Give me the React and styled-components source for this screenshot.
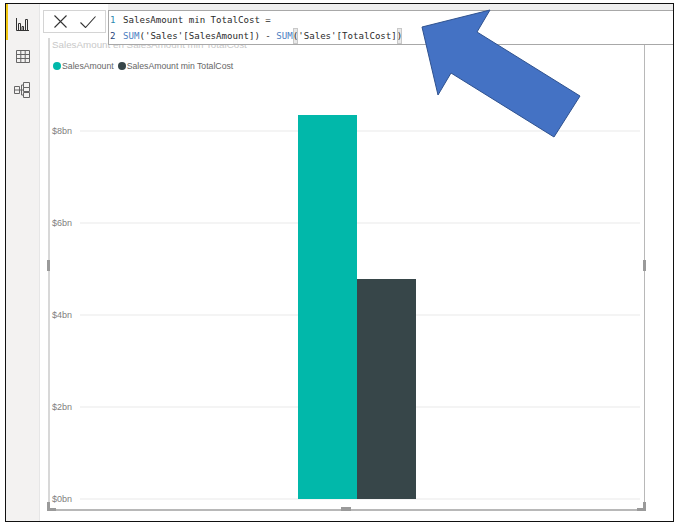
import React from 'react';
import styled, { createGlobalStyle } from 'styled-components';

const GlobalStyle = createGlobalStyle`
  html, body { margin: 0; padding: 0; background: #ffffff; }
  #root { width: 679px; height: 525px; }
`;

const Frame = styled.div`
  position: relative;
  width: 667px;
  height: 517px;
  margin: 3px 0 0 5px;
  border: 1px solid #111111;
  display: flex;
  overflow: hidden;
  background: #fff;
`;

const Rail = styled.nav`
  width: 33px;
  flex-shrink: 0;
  background: #f3f2f1;
  border-right: 1px solid #e6e6e6;
  display: flex;
  flex-direction: column;
`;

const RailItem = styled.div`
  height: ${p => (p.$active ? 32 : 33)}px;
  padding: ${p => (p.$active ? '4px' : '0')} 2px 0 0;
  display: flex;
  align-items: center;
  justify-content: center;
  border-left: 2px solid ${p => (p.$active ? '#f2c811' : 'transparent')};
`;

const Main = styled.main`
  flex: 1;
  min-width: 0;
  display: flex;
  padding: 34px 28px 10px 8px;
`;

const Visual = styled.section`
  position: relative;
  flex: 1;
  border: solid #b8b8b8;
  border-width: 0 1px 2px 2px;
  border-left-color: #d8d8d8;
  display: flex;
  flex-direction: column;
`;

const VisualTitle = styled.div`
  font: 9.8px/14px 'Liberation Sans', Arial, sans-serif;
  color: #c8c8c8;
  padding-left: 2px;
  height: 14px;
`;

const Legend = styled.div`
  display: flex;
  align-items: center;
  gap: 4px;
  height: 14px;
  margin-top: 7px;
  padding-left: 3px;
  font: 8.7px 'Liberation Sans', Arial, sans-serif;
  color: #666;
`;

const LegendEntry = styled.span`
  display: flex;
  align-items: center;
  gap: 1px;
`;

const Dot = styled.i`
  width: 8px;
  height: 8px;
  border-radius: 50%;
  background: ${p => p.$color};
`;

const Chart = styled.div`
  position: relative;
  flex: 1;
  display: flex;
  flex-direction: column;
  gap: 82px;
  padding: 53px 4px 0 2px;
`;

const GridRow = styled.div`
  display: flex;
  align-items: center;
  height: 10px;
  font: 9px 'Liberation Sans', Arial, sans-serif;
  color: #808080;
`;

const AxisLabel = styled.span`
  width: 28px;
`;

const GridLine = styled.div`
  flex: 1;
  height: 2px;
  background: #f4f4f4;
`;

const Bars = styled.div`
  position: absolute;
  left: 248px;
  bottom: 10px;
  display: flex;
  align-items: flex-end;
`;

const Bar = styled.div`
  width: 59px;
  background: ${p => p.$color};
`;

const SideHandle = styled.div`
  position: absolute;
  top: 222px;
  ${p => p.$side}: ${p => (p.$side === 'left' ? -3 : -2)}px;
  width: 3px;
  height: 11px;
  background: #9a9a9a;
`;

const BottomHandle = styled.div`
  position: absolute;
  left: 291px;
  bottom: -2px;
  width: 10px;
  height: 4px;
  background: #9a9a9a;
`;

const Corner = styled.div`
  position: absolute;
  bottom: -2px;
  ${p => p.$side}: ${p => (p.$side === 'left' ? -3 : -2)}px;
  width: 6px;
  height: 6px;
  border-bottom: 3px solid #9a9a9a;
  border-${p => p.$side}: 3px solid #9a9a9a;
`;

const TopBand = styled.div`
  position: absolute;
  top: 0;
  left: 102px;
  right: 0;
  height: 6px;
  background: #efefef;
`;

const FormulaBar = styled.div`
  position: absolute;
  top: 6px;
  left: 37px;
  right: 0;
  display: flex;
  gap: 2px;
`;

const Actions = styled.div`
  width: 63px;
  height: 23px;
  border: 1px solid #d4d4d4;
  background: #fff;
  display: flex;
  align-items: center;
  gap: 13px;
  padding-left: 10px;
  box-sizing: border-box;
`;

const Editor = styled.div`
  flex: 1;
  height: 35px;
  border: solid #a8a8a8;
  border-width: 1px 0 1px 1px;
  box-sizing: border-box;
  background: #fff;
  font: 9.1px/16px 'DejaVu Sans Mono', 'Liberation Mono', monospace;
  color: #2b2b2b;
  white-space: pre;
  padding-top: 1px;
`;

const Line = styled.div`
  display: flex;
  height: 16px;
`;

const LineNo = styled.span`
  width: 13px;
  padding-left: 1px;
  color: ${p => p.$color};
`;

const Fn = styled.span`
  color: #4a7ec2;
`;

const Paren = styled.span`
  background: #e8e8e8;
  outline: 1px solid #c8c8c8;
  outline-offset: -1px;
`;

const Arrow = styled.svg`
  position: absolute;
  top: -4px;
  left: -6px;
  pointer-events: none;
`;

const gridLabels = ['$8bn', '$6bn', '$4bn', '$2bn', '$0bn'];

const App = () => (
  <>
    <GlobalStyle />
    <Frame>
      <Rail>
        <RailItem $active>
          <svg width="13" height="13" viewBox="0 0 13 13" fill="none" stroke="#333" strokeWidth="1">
            <path d="M0.5 0v12.5h12.5M2.5 5.5h2v7h-2zM6 8.5h1.5v4H6zM9.5 1.5h2v11h-2z" />
          </svg>
        </RailItem>
        <RailItem>
          <svg width="14" height="13" viewBox="0 0 14 13" fill="none" stroke="#666" strokeWidth="1">
            <path d="M0.5 0.5h13v12h-13zM0.5 4.5h13M0.5 8.5h13M4.8 0.5v12M9.2 0.5v12" />
          </svg>
        </RailItem>
        <RailItem>
          <svg width="17" height="16" viewBox="0 0 17 16" fill="none" stroke="#666" strokeWidth="1">
            <path d="M9.5 0.5h6v5h-6zM9.5 5.5h6v4h-6zM9.5 10.5h6v5h-6zM0.5 4.5h5v7h-5zM0.5 8h5M5.5 8h4M7.5 3h2M7.5 3v10h2" />
          </svg>
        </RailItem>
      </Rail>
      <Main>
        <Visual>
          <VisualTitle>SalesAmount en SalesAmount min TotalCost</VisualTitle>
          <Legend>
            <LegendEntry><Dot $color="#01b8aa" />SalesAmount</LegendEntry>
            <LegendEntry><Dot $color="#374649" />SalesAmount min TotalCost</LegendEntry>
          </Legend>
          <Chart>
            {gridLabels.map(label => (
              <GridRow key={label}>
                <AxisLabel>{label}</AxisLabel>
                <GridLine />
              </GridRow>
            ))}
            <Bars>
              <Bar $color="#01b8aa" style={{ height: 384 }} />
              <Bar $color="#374649" style={{ height: 220 }} />
            </Bars>
          </Chart>
          <SideHandle $side="left" />
          <SideHandle $side="right" />
          <BottomHandle />
          <Corner $side="left" />
          <Corner $side="right" />
        </Visual>
      </Main>
      <TopBand />
      <FormulaBar>
        <Actions>
          <svg width="13" height="13" viewBox="0 0 13 13" fill="none" stroke="#333" strokeWidth="1.1">
            <path d="M0.5 0.5l12 12M12.5 0.5l-12 12" />
          </svg>
          <svg width="16" height="12" viewBox="0 0 16 12" fill="none" stroke="#333" strokeWidth="1.1">
            <path d="M0.5 6.5l5 5L15.5 0.5" />
          </svg>
        </Actions>
        <Editor>
          <Line><LineNo $color="#2b8ab0">1</LineNo>SalesAmount min TotalCost =</Line>
          <Line><LineNo $color="#1f3f7a">2</LineNo><Fn>SUM</Fn>('Sales'[SalesAmount]) - <Fn>SUM</Fn><Paren>(</Paren>'Sales'[TotalCost]<Paren>)</Paren></Line>
        </Editor>
      </FormulaBar>
      <Arrow width="679" height="525">
        <path
          d="M490 10L477 32L580 96L554 137L451 73L438 95L422 27Z"
          fill="#4472c4"
          stroke="#2f528f"
          strokeWidth="1"
        />
      </Arrow>
    </Frame>
  </>
);

export default App;
